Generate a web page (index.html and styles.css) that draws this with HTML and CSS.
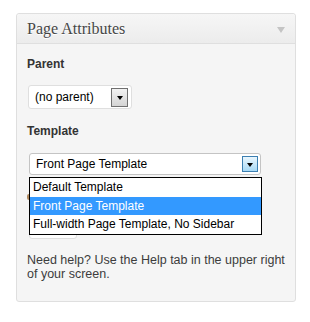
FILE: index.html
```html
<!DOCTYPE html>
<html lang="en">
<head>
    <meta charset="UTF-8">
    <title>Page Attributes</title>
    <link rel="stylesheet" href="styles.css">
</head>
<body>
    <div class="postbox">
        <div class="hndle">
            <h3>Page Attributes</h3>
            <span class="toggle"></span>
        </div>
        <div class="inside">
            <p class="label">Parent</p>
            <div class="select select-parent">
                <span class="value">(no parent)</span>
                <span class="arrow"><span class="tri"></span></span>
            </div>

            <p class="label label-template">Template</p>
            <div class="template-wrap">
                <div class="select select-template">
                    <span class="value">Front Page Template</span>
                    <span class="arrow arrow-hover"><span class="tri"></span></span>
                </div>
                <ul class="dropdown">
                    <li>Default Template</li>
                    <li class="selected">Front Page Template</li>
                    <li>Full-width Page Template, No Sidebar</li>
                </ul>
                <!-- order field sits under the open list, only its edge peeks out -->
                <span class="order-edge"></span>
                <div class="order-input"></div>
            </div>

            <p class="help">Need help? Use the Help tab in the upper right of your screen.</p>
        </div>
    </div>
</body>
</html>
```

FILE: styles.css
```css
* {
    margin: 0;
    padding: 0;
    box-sizing: border-box;
}

body {
    background: #ffffff;
    font-family: "Liberation Sans", Arial, sans-serif;
    color: #333333;
}

.postbox {
    margin: 13px 0 0 16px;
    width: 280px;
    height: 289px;
    border: 1px solid #dfdfdf;
    border-radius: 3px;
    background: #f5f5f5;
    box-shadow: inset 0 1px 0 #ffffff;
}

.hndle {
    height: 30px;
    display: flex;
    align-items: center;
    justify-content: space-between;
    padding: 0 10px 0 10px;
    background: linear-gradient(#f6f6f6, #ececec);
    border-bottom: 1px solid #dfdfdf;
    border-radius: 3px 3px 0 0;
}

.hndle h3 {
    font-family: "Liberation Serif", "Times New Roman", serif;
    font-weight: normal;
    font-size: 16px;
    color: #464646;
    text-shadow: 0 1px 0 #ffffff;
}

.toggle {
    width: 0;
    height: 0;
    border-left: 4px solid transparent;
    border-right: 4px solid transparent;
    border-top: 6px solid #c4c4c4;
    margin-top: 2px;
}

.inside {
    padding: 0 0 0 10px;
}

.label {
    font-size: 12px;
    font-weight: bold;
    color: #333333;
    line-height: 14px;
}

.inside > .label:first-child {
    margin-top: 13px;
}

.select {
    display: flex;
    align-items: center;
    justify-content: space-between;
    background: #ffffff;
    border: 1px solid #dfdfdf;
    border-radius: 3px;
    font-size: 12px;
    color: #000000;
}

.select .value {
    padding-left: 6px;
}

.select-parent {
    margin: 14px 0 0 1px;
    width: 104px;
    height: 24px;
    padding-right: 3px;
}

.label-template {
    margin-top: 15px;
}

.select-template {
    width: 232px;
    height: 22px;
    border-color: #c4c4c4;
    padding-right: 2px;
}

.arrow {
    width: 17px;
    height: 19px;
    border: 1px solid #707070;
    background: linear-gradient(#f2f2f2, #d4d4d4);
    display: flex;
    align-items: center;
    justify-content: center;
}

.select-template .arrow {
    width: 16px;
    height: 16px;
}

.arrow-hover {
    border-color: #3c7fb1;
    background: linear-gradient(#eaf6fd, #a7d9f5);
}

.tri {
    width: 0;
    height: 0;
    border-left: 3px solid transparent;
    border-right: 3px solid transparent;
    border-top: 4px solid #000000;
    margin-top: 2px;
}

.template-wrap {
    position: relative;
    margin: 15px 0 0 2px;
}

.order-edge {
    display: block;
    width: 4px;
    height: 6px;
    margin: 19px 0 0 -2px;
    background: #b08a60;
    border-radius: 2px;
}

.order-input {
    margin-top: 17px;
    width: 48px;
    height: 22px;
    background: #ffffff;
    border: 1px solid #dfdfdf;
    border-radius: 3px;
}

.dropdown {
    position: absolute;
    top: 24px;
    left: 0;
    width: 233px;
    list-style: none;
    background: #ffffff;
    border: 1px solid #000000;
    font-size: 12px;
    color: #000000;
    z-index: 2;
}

.dropdown li {
    height: 18.5px;
    line-height: 18.5px;
    padding-left: 3px;
}

.dropdown li.selected {
    background: #3399ff;
    color: #ffffff;
}

.help {
    margin-top: 14px;
    font-size: 12.5px;
    line-height: 14px;
    color: #3c3c3c;
    padding-right: 6px;
}
```
